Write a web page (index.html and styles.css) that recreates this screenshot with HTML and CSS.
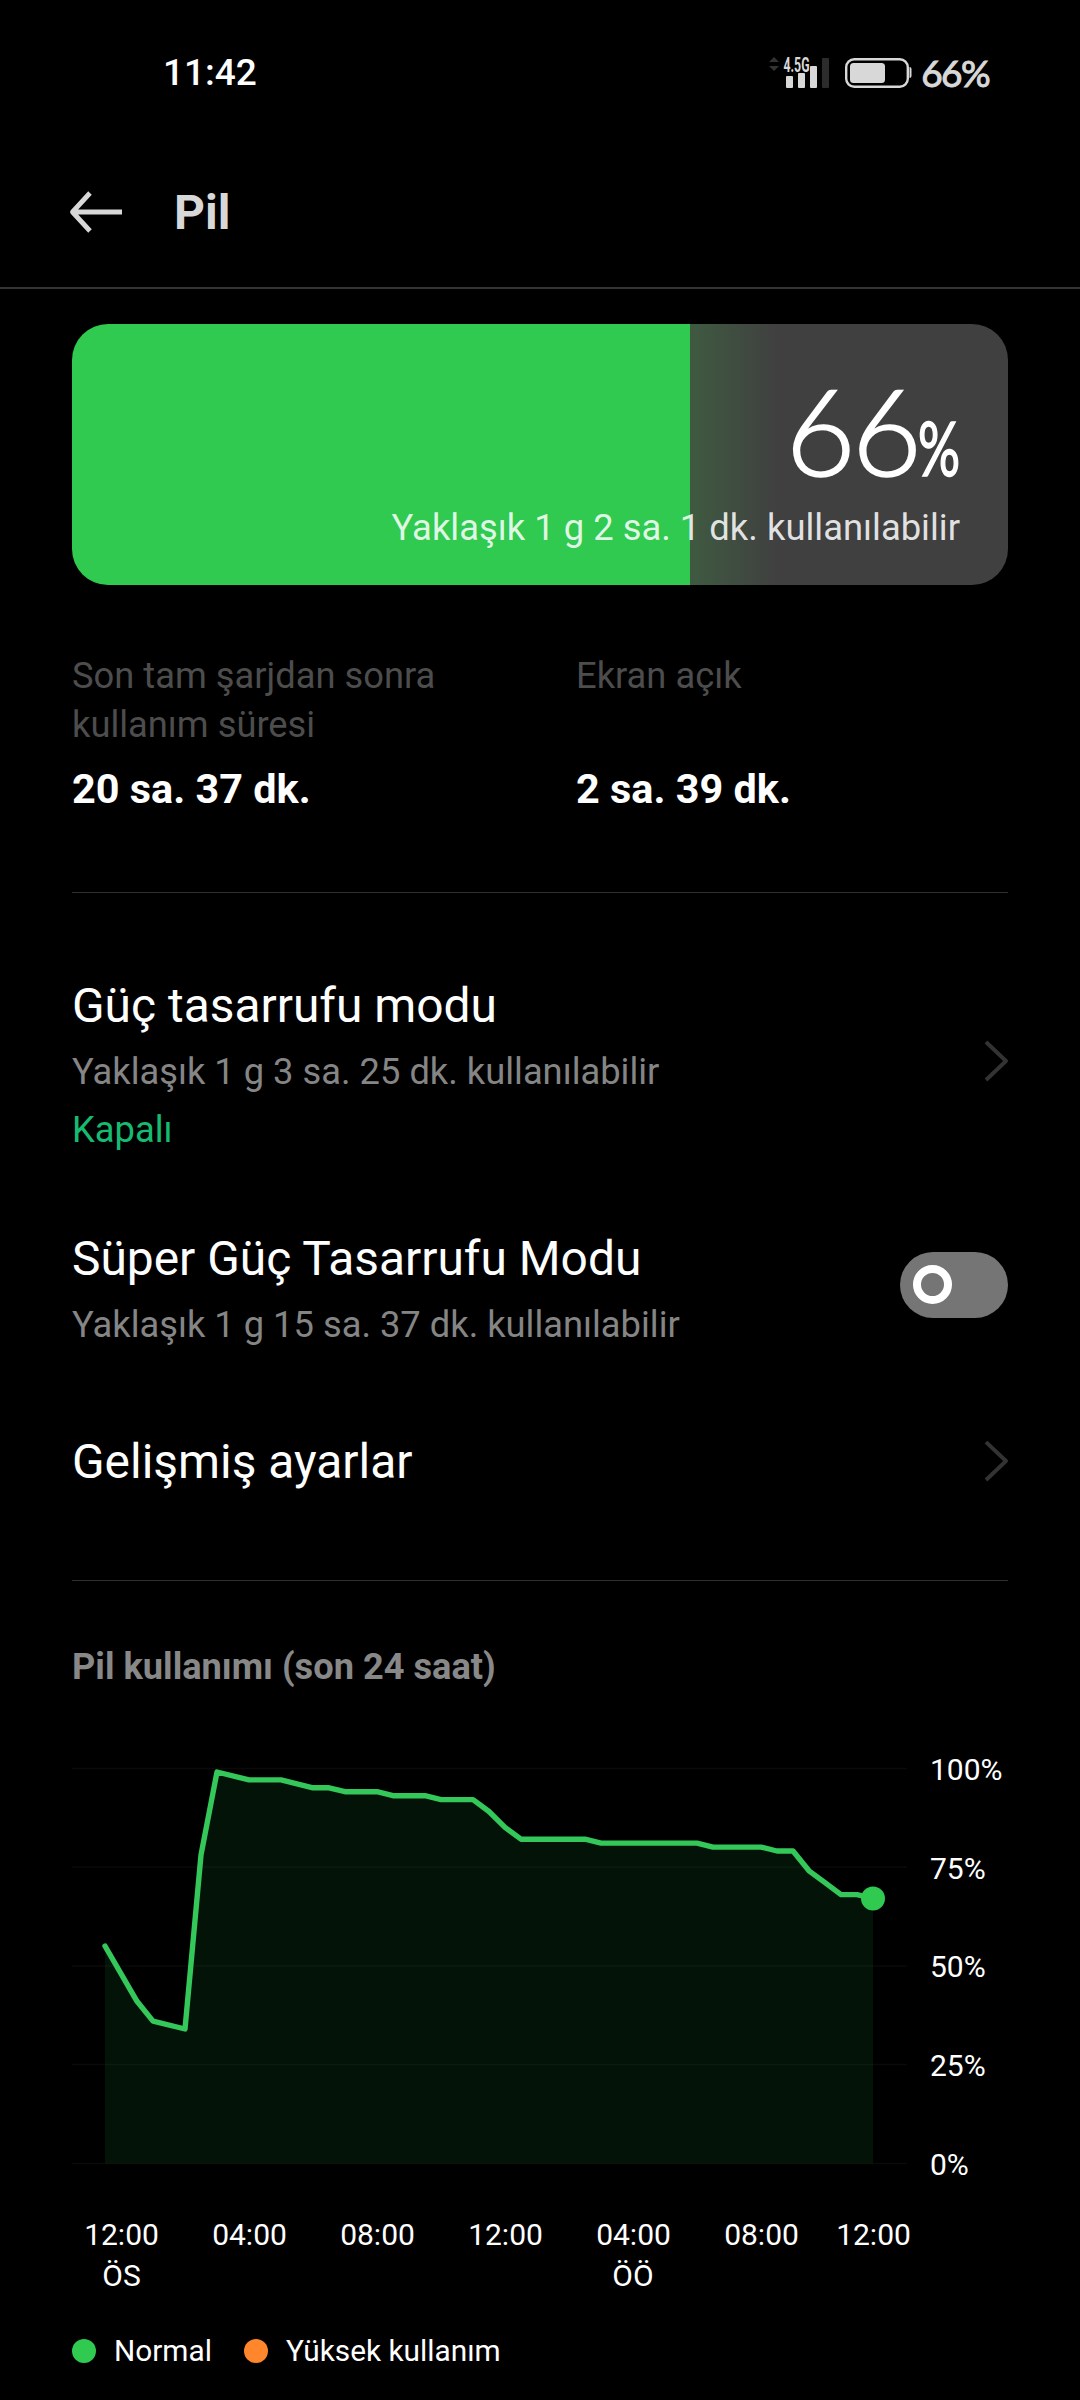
FILE: index.html
```html
<!DOCTYPE html>
<html lang="tr">
<head>
    <meta charset="UTF-8">
    <meta name="viewport" content="width=device-width, initial-scale=1.0">
    <title>Pil</title>
    <link rel="stylesheet" href="styles.css">
</head>
<body>

<div class="status-bar">
    <span class="clock">11:42</span>
    <div class="status-icons">
        <svg class="signal" width="62" height="36" viewBox="0 0 62 36">
            <path d="M0 8l5-5 5 5zM0 12h10l-5 5z" fill="#333"/>
            <text x="14.5" y="18" class="network" textLength="26" lengthAdjust="spacingAndGlyphs">4.5G</text>
            <rect x="17" y="22" width="7" height="12" rx="1" fill="#d8d8d8"/>
            <rect x="29" y="19" width="7" height="15" rx="1" fill="#d8d8d8"/>
            <rect x="41" y="12" width="7" height="22" rx="1" fill="#d8d8d8"/>
            <rect x="53" y="4" width="7" height="30" rx="1" fill="#2c2c2c"/>
        </svg>
        <svg class="battery" width="68" height="36" viewBox="0 0 68 36">
            <rect x="1.2" y="5.2" width="61.6" height="27.6" rx="8" fill="none" stroke="#d8d8d8" stroke-width="2.4"/>
            <rect x="5" y="9" width="35" height="20" rx="3.5" fill="#d8d8d8"/>
            <path d="M64.5 13q2 0 2 2v7q0 2-2 2z" fill="#d8d8d8"/>
        </svg>
        <span class="percent">66%</span>
    </div>
</div>

<header>
    <svg width="54" height="44" viewBox="0 0 54 44">
        <path d="M21 3L3.5 22 21 41M4 22h49" fill="none" stroke="#d8d8d8" stroke-width="4.8" stroke-linejoin="round"/>
    </svg>
    <h1>Pil</h1>
</header>

<div class="container">
    <div class="battery-card">
        <div class="level">66<span class="level-sign">%</span></div>
        <div class="remaining">Yaklaşık 1 g 2 sa. 1 dk. kullanılabilir</div>
    </div>

    <div class="stats">
        <div class="stat">
            <p class="label">Son tam şarjdan sonra kullanım süresi</p>
            <p class="value">20 sa. 37 dk.</p>
        </div>
        <div class="stat">
            <p class="label">Ekran açık</p>
            <p class="value">2 sa. 39 dk.</p>
        </div>
    </div>

    <div class="settings">
        <div class="row">
            <div>
                <h2>Güç tasarrufu modu</h2>
                <p class="desc">Yaklaşık 1 g 3 sa. 25 dk. kullanılabilir</p>
                <p class="state">Kapalı</p>
            </div>
            <svg class="chevron" width="24" height="42" viewBox="0 0 24 42">
                <path d="M2 2l20 19L2 40" fill="none" stroke="#333" stroke-width="3.8" stroke-linejoin="round"/>
            </svg>
        </div>
        <div class="row">
            <div>
                <h2>Süper Güç Tasarrufu Modu</h2>
                <p class="desc">Yaklaşık 1 g 15 sa. 37 dk. kullanılabilir</p>
            </div>
            <div class="toggle"><span class="knob"></span></div>
        </div>
        <div class="row last">
            <h2>Gelişmiş ayarlar</h2>
            <svg width="24" height="42" viewBox="0 0 24 42">
                <path d="M2 1l20 19L2 39" fill="none" stroke="#333" stroke-width="3.8" stroke-linejoin="round"/>
            </svg>
        </div>
    </div>

    <h3>Pil kullanımı (son 24 saat)</h3>

    <svg class="chart" width="936" height="560" viewBox="0 0 936 560">
        <polygon class="area" points="33,423.5 33,206 65,261.3 81,281.1 113,289 129,115 145,32 177,39.9 209,39.9 241,47.8 257,47.8 273,51.7 305,51.7 321,55.7 353,55.7 369,59.6 401,59.6 417,71.5 433,87.3 449,99.2 513,99.2 529,103.1 625,103.1 641,107.1 689,107.1 705,111 721,111 737,130.8 753,142.7 769,154.6 785,154.6 801,158.5 801,423.5"/>
        <g class="grid">
            <path d="M0 28.5h835M0 127h835M0 226h835M0 324.5h835M0 423.5h835"/>
        </g>
        <polyline class="line" points="33,206 65,261.3 81,281.1 113,289 129,115 145,32 177,39.9 209,39.9 241,47.8 257,47.8 273,51.7 305,51.7 321,55.7 353,55.7 369,59.6 401,59.6 417,71.5 433,87.3 449,99.2 513,99.2 529,103.1 625,103.1 641,107.1 689,107.1 705,111 721,111 737,130.8 753,142.7 769,154.6 785,154.6 801,158.5"/>
        <circle cx="801" cy="158.5" r="12" fill="#2fca4f"/>

        <text x="858" y="40">100%</text>
        <text x="858" y="139">75%</text>
        <text x="858" y="237">50%</text>
        <text x="858" y="336">25%</text>
        <text x="858" y="435">0%</text>

        <g class="hours">
            <text x="49.5" y="504.5">12:00</text>
            <text x="49.5" y="546">ÖS</text>
            <text x="177.5" y="504.5">04:00</text>
            <text x="305.5" y="504.5">08:00</text>
            <text x="433.5" y="504.5">12:00</text>
            <text x="561.5" y="504.5">04:00</text>
            <text x="561" y="546">ÖÖ</text>
            <text x="689.5" y="504.5">08:00</text>
            <text x="801.5" y="504.5">12:00</text>
        </g>
    </svg>

    <div class="legend">
        <span class="dot"></span>
        <span class="name">Normal</span>
        <span class="dot high"></span>
        <span class="name">Yüksek kullanım</span>
    </div>
</div>

</body>
</html>
```
FILE: styles.css
```css
body {
    font-family: Roboto, sans-serif;
    background-color: #000;
    color: #fff;
    margin: 0;
    padding: 0;
}
h1, h2, h3, p {
    margin: 0;
}
svg {
    display: block;
}
.status-bar {
    height: 137px;
    padding: 7px 91px 0 163px;
    box-sizing: border-box;
    display: flex;
    align-items: center;
    justify-content: space-between;
}
.clock {
    font-size: 37px;
    font-weight: 500;
}
.status-icons {
    display: flex;
    align-items: center;
    color: #d8d8d8;
}
.signal {
    margin-right: 14px;
}
.network {
    font-size: 21px;
    font-weight: 700;
    fill: #d8d8d8;
}
.battery {
    margin-right: 8px;
}
.percent {
    font-family: Lato, sans-serif;
    font-size: 37px;
    letter-spacing: -1.6px;
    -webkit-text-stroke: 1px #d8d8d8;
}
header {
    height: 150px;
    padding-left: 69px;
    border-bottom: 2px solid #333;
    display: flex;
    align-items: center;
}
h1 {
    margin-left: 51px;
    font-size: 48px;
    font-weight: 700;
    color: #d8d8d8;
}
.container {
    padding: 35px 72px 0;
}
.battery-card {
    height: 261px;
    padding: 46px 48px 0;
    box-sizing: border-box;
    border-radius: 36px;
    background: linear-gradient(90deg, #2fca4f 618px, #3f5a41 618px, #404040 704px);
    text-align: right;
}
.level {
    height: 120px;
    font-family: Lato, sans-serif;
    font-size: 121px;
    font-weight: 300;
    line-height: 120px;
    letter-spacing: -4px;
    -webkit-text-stroke: 1.6px #fff;
}
.level-sign {
    display: inline-block;
    font-size: 75px;
    font-weight: 400;
    line-height: 75px;
    letter-spacing: 0;
    transform: scaleX(0.7);
    transform-origin: right;
    margin-left: -18px;
}
.remaining {
    font-size: 36.4px;
    line-height: 42px;
    margin-top: 17px;
    color: rgba(255, 255, 255, 0.85);
}
.stats {
    display: grid;
    grid-template-columns: 504px 1fr;
    height: 242px;
    padding-top: 65px;
    box-sizing: content-box;
    border-bottom: 1px solid #303030;
}
.stat {
    height: 166px;
    display: flex;
    flex-direction: column;
    justify-content: space-between;
}
.label {
    max-width: 400px;
    font-size: 36.3px;
    line-height: 49px;
    padding-top: 1px;
    color: #4d4d4d;
}
.value {
    font-size: 41.4px;
    font-weight: 700;
    line-height: 54px;
}
.settings {
    padding: 83px 0 88px;
    border-bottom: 1px solid #303030;
}
.row {
    display: flex;
    align-items: center;
    justify-content: space-between;
    margin-bottom: 70px;
}
h2 {
    font-size: 47.9px;
    font-weight: 400;
    line-height: 60px;
}
.desc, .state {
    font-size: 36.3px;
    line-height: 58px;
}
.desc {
    margin-top: 7px;
    color: #858585;
}
.state {
    color: #16bb71;
}
.chevron {
    margin-bottom: 13px;
}
.toggle {
    width: 108px;
    height: 66px;
    padding: 13px;
    box-sizing: border-box;
    border-radius: 33px;
    background: #757575;
    margin-bottom: 13px;
}
.knob {
    display: block;
    width: 39px;
    height: 39px;
    box-sizing: border-box;
    border: 8px solid #fff;
    border-radius: 50%;
}
.last {
    margin-top: 78px;
    margin-bottom: 0;
}
h3 {
    margin-top: 61px;
    font-size: 36.2px;
    font-weight: 700;
    line-height: 50px;
    color: #888;
}
.chart {
    margin-top: 48px;
    font-size: 30px;
    fill: #fff;
}
.area {
    fill: #031307;
}
.grid {
    stroke: rgba(255, 255, 255, 0.04);
    stroke-width: 1.6;
}
.line {
    fill: none;
    stroke: #34c759;
    stroke-width: 5.4;
    stroke-linejoin: round;
    stroke-linecap: round;
}
.hours {
    text-anchor: middle;
}
.legend {
    display: flex;
    align-items: center;
    margin-top: 31px;
    font-size: 29.8px;
    line-height: 40px;
}
.dot {
    width: 24px;
    height: 24px;
    border-radius: 50%;
    background: #2fca4f;
}
.high {
    background: #ff862a;
}
.name {
    margin: 0 32px 0 18px;
}
```
